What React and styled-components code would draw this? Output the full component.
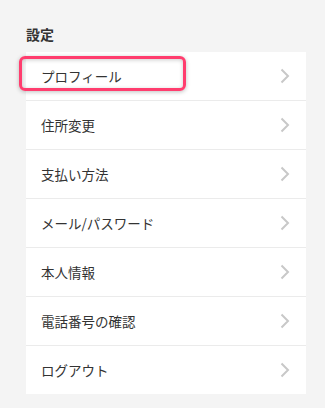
import styled, { createGlobalStyle } from 'styled-components';

const GlobalStyle = createGlobalStyle`
  body {
    margin: 0;
    background: #f4f4f4;
    font-family: "Noto Sans CJK JP", "Liberation Sans", sans-serif;
  }
`;

const items = [
  'プロフィール',
  '住所変更',
  '支払い方法',
  'メール/パスワード',
  '本人情報',
  '電話番号の確認',
  'ログアウト',
];

const Page = styled.div`
  padding: 24px 19px 0 26px;
`;

const Title = styled.h2`
  margin: 0 0 8px 0;
  font-size: 14px;
  line-height: 20px;
  font-weight: 700;
  color: #333;
`;

const Card = styled.ul`
  list-style: none;
  margin: 0;
  padding: 0;
  background: #fff;
`;

const Row = styled.li`
  position: relative;
  display: flex;
  align-items: center;
  justify-content: space-between;
  height: 48px;
  padding: 0 16px 0 15px;
  border-top: ${p => (p.$first ? 'none' : '1px solid #ebebeb')};
  font-size: 13.5px;
  color: #333;
`;

const Highlight = styled.span`
  position: absolute;
  left: -7px;
  top: 4px;
  width: 167px;
  height: 35px;
  box-sizing: border-box;
  border: 3px solid #ff3d6e;
  border-radius: 6px;
  box-shadow: 0 1px 4px rgba(0, 0, 0, 0.25), inset 0 1px 4px rgba(0, 0, 0, 0.2);
`;

const Chevron = () => (
  <svg width="10" height="16" viewBox="0 0 10 16">
    <path d="M1.5 1.5 L8 8 L1.5 14.5" fill="none" stroke="#c8c8c8" strokeWidth="2" />
  </svg>
);

export default function App() {
  return (
    <Page>
      <GlobalStyle />
      <Title>設定</Title>
      <Card>
        {items.map((label, i) => (
          <Row key={label} $first={i === 0}>
            {i === 0 && <Highlight />}
            <span>{label}</span>
            <Chevron />
          </Row>
        ))}
      </Card>
    </Page>
  );
}
